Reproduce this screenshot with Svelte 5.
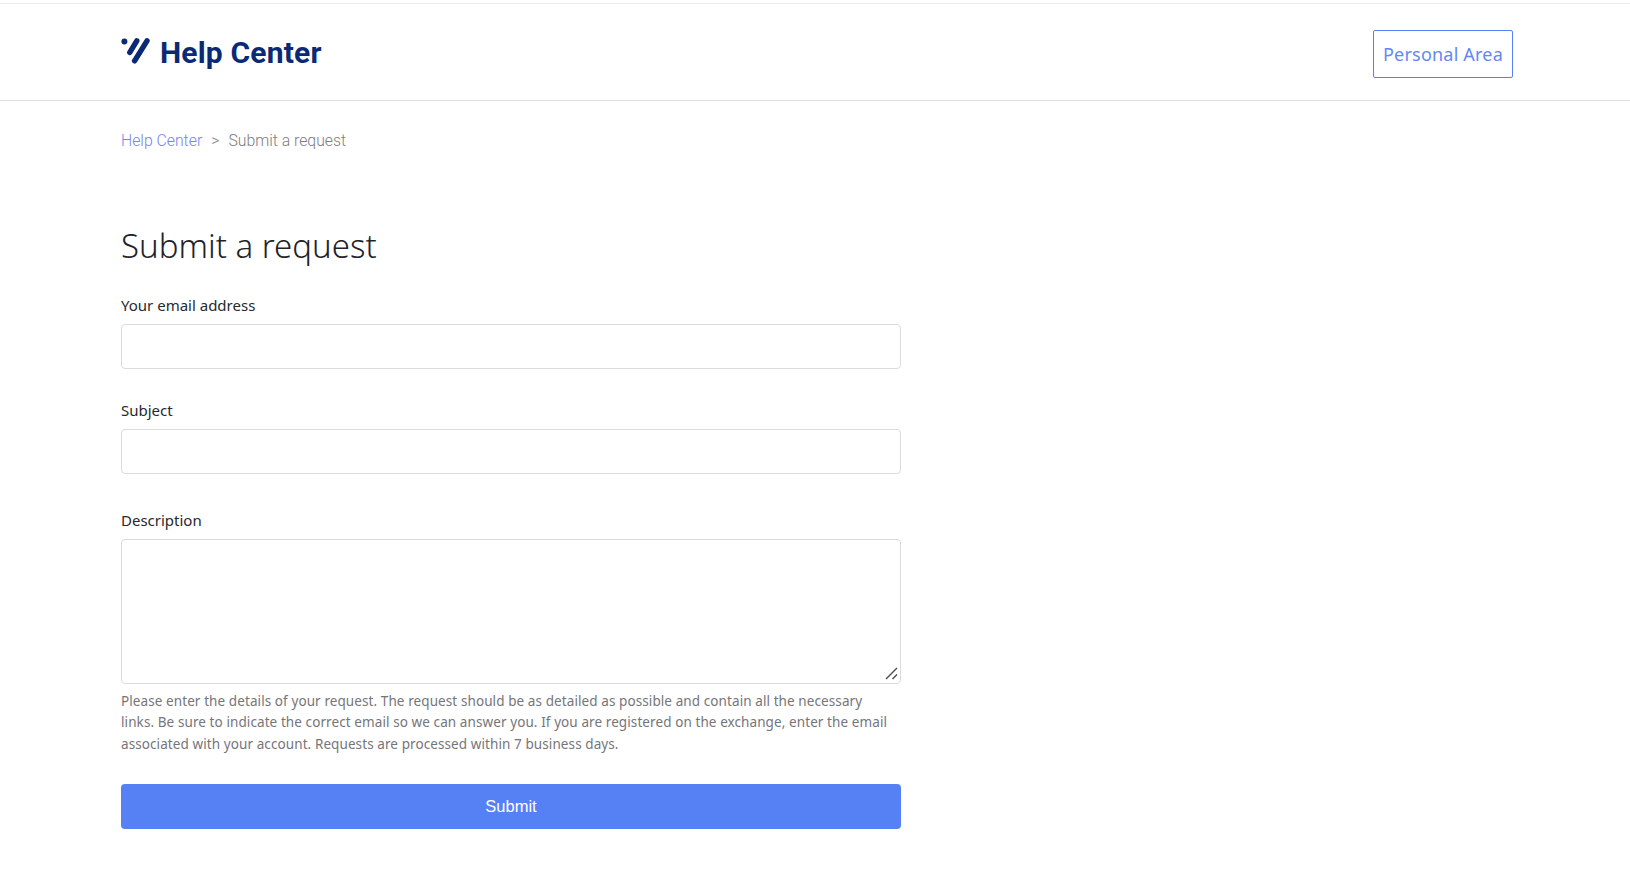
<script>
  let email = $state('');
  let subject = $state('');
  let description = $state('');
</script>

<div class="page">
  <header>
    <a class="brand" href="#home">
      <svg width="30" height="27" viewBox="0 0 30 27" aria-hidden="true">
        <circle cx="3.4" cy="4.4" r="3" fill="#0a2a75" />
        <path d="M15.8 3.8 L8.8 15.4" stroke="#0a2a75" stroke-width="5.4" stroke-linecap="round" />
        <path d="M26 3.8 L13.6 23.8" stroke="#0a2a75" stroke-width="5.4" stroke-linecap="round" />
      </svg>
      <span>Help Center</span>
    </a>
    <a class="personal" href="#personal">Personal Area</a>
  </header>

  <main>
    <nav class="crumbs">
      <a href="#home">Help Center</a>
      <span class="sep">&gt;</span>
      <span>Submit a request</span>
    </nav>

    <h1>Submit a request</h1>

    <form onsubmit={(e) => e.preventDefault()}>
      <div class="field">
        <label for="email">Your email address</label>
        <input id="email" type="text" bind:value={email} />
      </div>
      <div class="field second">
        <label for="subject">Subject</label>
        <input id="subject" type="text" bind:value={subject} />
      </div>
      <div class="field desc">
        <label for="description">Description</label>
        <div class="area">
          <textarea id="description" bind:value={description}></textarea>
          <svg class="grip" width="13" height="13" viewBox="0 0 13 13" aria-hidden="true">
            <path d="M1 12 L12 1 M7.5 12 L12 7.5" stroke="#4a4a4a" stroke-width="1.4" fill="none" />
          </svg>
        </div>
      </div>
      <p class="hint">Please enter the details of your request. The request should be as detailed as possible and contain all the necessary links. Be sure to indicate the correct email so we can answer you. If you are registered on the exchange, enter the email associated with your account. Requests are processed within 7 business days.</p>
      <button type="submit">Submit</button>
    </form>
  </main>
</div>

<style>
  :global(body) {
    margin: 0;
    background: #fff;
    font-family: "Noto Sans", sans-serif;
  }
  .page {
    padding-top: 3px;
    min-height: 883px;
    box-sizing: border-box;
  }
  header {
    height: 96px;
    border-top: 1px solid #ececec;
    border-bottom: 1px solid #dedede;
    padding: 0 117px 0 121px;
    display: flex;
    align-items: flex-start;
    justify-content: space-between;
  }
  .brand {
    display: flex;
    align-items: center;
    gap: 9px;
    margin-top: 31px;
    height: 36px;
    color: #0a2a75;
    font: 700 30px/36px Roboto, sans-serif;
    letter-spacing: 0.18px;
    text-decoration: none;
  }
  .brand svg { margin-top: -5px; }
  .personal {
    box-sizing: border-box;
    width: 140px;
    height: 48px;
    margin-top: 26px;
    border: 1px solid #5581f4;
    border-radius: 2px;
    display: flex;
    align-items: center;
    justify-content: center;
    color: #6487f5;
    font-size: 18px;
    letter-spacing: 0.2px;
    text-decoration: none;
  }
  main {
    padding: 0 121px;
  }
  .crumbs {
    margin-top: 30px;
    display: flex;
    gap: 9px;
    color: #7c7c82;
    font: 300 15.8px/20px Roboto, sans-serif;
  }
  .crumbs a {
    color: #7a80fa;
    text-decoration: none;
  }
  h1 {
    margin: 73px 0 0;
    color: #1f2328;
    font-weight: 300;
    font-size: 33px;
    line-height: 44px;
  }
  form {
    width: 780px;
    margin-top: 27px;
  }
  .field {
    display: flex;
    flex-direction: column;
    gap: 9px;
    margin-bottom: 31px;
  }
  .field.second { margin-bottom: 36px; }
  .field.desc { margin-bottom: 0; }
  label {
    color: #26292e;
    font-size: 15px;
    line-height: 20px;
  }
  input, textarea {
    box-sizing: border-box;
    width: 100%;
    border: 1px solid #dcdcdc;
    border-radius: 4px;
    background: #fff;
    font: inherit;
    outline: none;
  }
  input { height: 45px; }
  .area { position: relative; }
  textarea {
    display: block;
    height: 145px;
    resize: vertical;
  }
  textarea::-webkit-resizer { background: transparent; }
  .grip {
    position: absolute;
    right: 3px;
    bottom: 4px;
    pointer-events: none;
  }
  .hint {
    max-width: 770px;
    margin: 7px 0 0;
    color: #75757a;
    font-size: 13.5px;
    letter-spacing: 0.09px;
    line-height: 21.3px;
  }
  button {
    display: block;
    width: 100%;
    height: 45px;
    margin-top: 29px;
    border: 0;
    border-radius: 4px;
    background: #5581f4;
    color: #fff;
    font: 400 16.5px "Liberation Sans", Arial, sans-serif;
    cursor: pointer;
  }
</style>
